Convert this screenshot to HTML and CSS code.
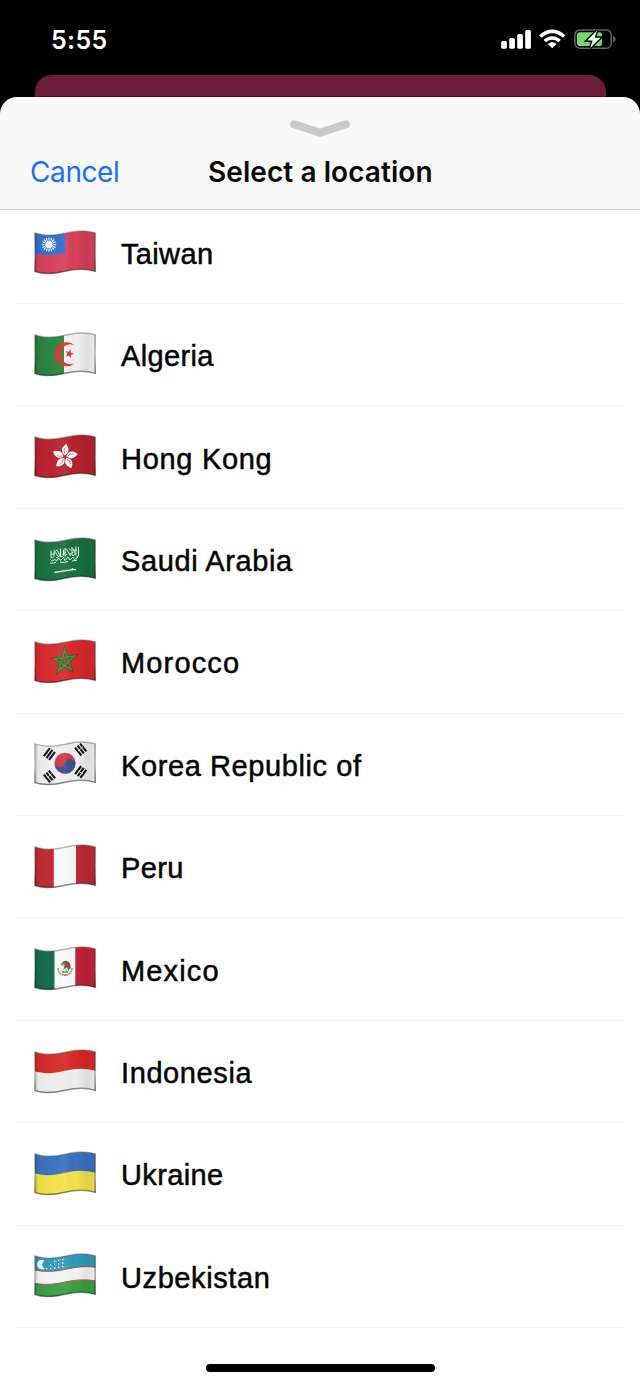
FILE: index.html
```html
<!DOCTYPE html>
<html lang="en">
<head>
<meta charset="utf-8">
<title>Select a location</title>
<link rel="stylesheet" href="styles.css">
</head>
<body>
<svg class="defs" width="0" height="0" aria-hidden="true">
  <defs>
    <path id="outline" d="M.9 2.9C10 6 20 5.8 31 3.3C42 .5 51-.1 61.3 2.9V41.3C51 38.2 42 38.7 31 41.2C20 43.8 10 44.5 .9 41.6Z"/>
    <clipPath id="wave"><use href="#outline"/></clipPath>
    <linearGradient id="fold">
      <stop offset="0" stop-color="#000" stop-opacity=".2"/>
      <stop offset=".06" stop-color="#000" stop-opacity=".03"/>
      <stop offset=".28" stop-color="#fff" stop-opacity=".02"/>
      <stop offset=".5" stop-color="#fff" stop-opacity=".07"/>
      <stop offset=".68" stop-color="#000" stop-opacity="0"/>
      <stop offset=".86" stop-color="#000" stop-opacity=".08"/>
      <stop offset=".97" stop-color="#000" stop-opacity=".04"/>
      <stop offset="1" stop-color="#000" stop-opacity=".25"/>
    </linearGradient>
    <linearGradient id="rim" x2="0" y2="1">
      <stop offset="0" stop-color="#666" stop-opacity=".5"/>
      <stop offset=".5" stop-color="#222" stop-opacity=".2"/>
      <stop offset="1" stop-color="#000" stop-opacity=".5"/>
    </linearGradient>
    <g id="shade"><use href="#outline" fill="url(#fold)"/><use href="#outline" fill="none" stroke="url(#rim)" stroke-width="1.4"/></g>
    <path id="star" d="M0-10L2.25-3.09H9.51L3.63 1.18L5.88 8.09L0 3.82L-5.88 8.09L-3.63 1.18L-9.51-3.09H-2.25Z"/>
    <path id="petal" d="M-.6-1.5C-5-4.5-5.2-9.5-.3-13C1-11 4.4-7 1.6-3.5Z"/>
    <g id="bars" stroke="#111" stroke-width="2.1"><path d="M-5-3.2H5M-5 0H5M-5 3.2H5"/></g>
  </defs>
</svg>
<div class="phone">
  <header class="status">
    <time class="clock">5:55</time>
    <svg class="indicators" width="116" height="24" viewBox="0 0 116 24">
      <g fill="#fff">
        <rect x="1.2" y="14" width="5.7" height="7.7" rx="1.5"/>
        <rect x="9.2" y="11" width="5.7" height="10.7" rx="1.5"/>
        <rect x="17.2" y="7" width="5.7" height="14.7" rx="1.5"/>
        <rect x="25.2" y="3" width="5.7" height="18.7" rx="1.5"/>
        <path d="M39.2 8.2C46.5.7 58 .7 65.3 8.2L62.8 10.7C56.8 4.7 47.7 4.7 41.7 10.7Z"/>
        <path d="M43.6 12.7C48.5 8 56 8 60.9 12.7L58.4 15.2C54.8 11.9 49.7 11.9 46.1 15.2Z"/>
        <path d="M47.9 16.9C50.4 14.6 54.1 14.6 56.6 16.9L52.25 21.3Z"/>
      </g>
      <rect x="74.9" y="3" width="36.4" height="18.2" rx="5" fill="none" stroke="#666" stroke-width="1.5"/>
      <path d="M113.2 9.2C116.4 10.2 116.4 14.4 113.2 15.4Z" fill="#666"/>
      <rect x="77" y="5.2" width="25" height="13.8" rx="2.8" fill="#71d971"/>
      <path d="M97 3.5L87 13.5H92.6L90.2 21L100.6 10.7H94.7Z" fill="#fff" stroke="#000" stroke-width="2.8" paint-order="stroke"/>
    </svg>
  </header>
  <div class="backdrop"></div>
  <main class="sheet">
    <div class="sheet-head">
      <svg class="grabber" width="62" height="20" viewBox="0 0 62 20"><path d="M5 5.3L31 13.8L57 5.3" fill="none" stroke="#c8c7ce" stroke-width="8" stroke-linecap="round" stroke-linejoin="round"/></svg>
      <div class="titlebar"><span class="cancel">Cancel</span><h1 class="title">Select a location</h1></div>
    </div>
    <ul class="list">
      <li class="row"><svg class="flag" viewBox="0 0 62 46"><g clip-path="url(#wave)"><path fill="#d6415a" d="M0 0h62v46H0z"/><path fill="#2e6fd0" d="M0 0h31v22.8C20 25 10 26 0 23z"/><path d="M15 7.4v14.4M7.8 14.6h14.4M9.9 9.5L20.1 19.7M9.9 19.7L20.1 9.5M12.2 8L17.8 21.2M17.8 8L12.2 21.2M8.4 11.8L21.6 17.4M8.4 17.4L21.6 11.8" stroke="#fff" stroke-width="1.1"/><circle cx="15" cy="14.6" r="4.2" fill="#fff" stroke="#2e6fd0" stroke-width=".7"/></g><use href="#shade"/></svg><span class="name">Taiwan</span></li>
      <li class="row"><svg class="flag" viewBox="0 0 62 46"><g clip-path="url(#wave)"><path fill="#f1f1f2" d="M0 0h62v46H0z"/><path fill="#26843f" d="M0 0h30v46H0z"/><path fill="#e52b25" d="M40.7 13.3A12 12 0 1 0 40.7 31.3A10 10 0 1 1 40.7 13.3Z"/><use href="#star" fill="#e52b25" transform="translate(35.3 21.8) rotate(16) scale(.48)"/></g><use href="#shade"/></svg><span class="name">Algeria</span></li>
      <li class="row wide"><svg class="flag" viewBox="0 0 62 46"><g clip-path="url(#wave)"><path fill="#b7222d" d="M0 0h62v46H0z"/><g transform="translate(31 22.8)" fill="#fff"><use href="#petal" transform="rotate(8)"/><use href="#petal" transform="rotate(80)"/><use href="#petal" transform="rotate(152)"/><use href="#petal" transform="rotate(224)"/><use href="#petal" transform="rotate(296)"/><path d="M0-3Q-2-6 0-9M3-1Q5-4 8.5-2.8M2 2.5Q5.5 3.5 5.3 7.3M-2 2.5Q-1.5 6-5.3 7.3M-3-1Q-6 1-8.5-2.8" fill="none" stroke="#c92631" stroke-width=".7"/></g></g><use href="#shade"/></svg><span class="name">Hong Kong</span></li>
      <li class="row mid"><svg class="flag" viewBox="0 0 62 46"><g clip-path="url(#wave)"><path fill="#18703f" d="M0 0h62v46H0z"/><g fill="none" stroke="#e4f3e9" stroke-width="1"><path d="M17 13.5v7q2 1 3-1v-5M20 12.5l4 7M22.5 20.5q3 .5 3-3l-2-4M26.5 11.5v8q2 1 3-1v-6M31 11v8.5M32.5 12l4 7M35 11.5l2 2M38 10v8.5q2 1 3-2l-2-5M42 9.5v9M44.5 10v8q-.3 2-2 2"/><path d="M16.5 22.5q2.5 3 4-.5l2 2 2-3 2 2.5 3-3 1.5 3 3-3.5 2 3 3-3 1.5 2.5q3-1 4-4M17 17q3 1 4-1M24 16l2 2M28.5 17.5l3-2M35 17q3 .5 4-2M16 26q4 .5 6-.7M26 25.2q5 .8 8-.8M38 24l5-.8M22 14l1.5-1.5M33 17l-2 2M40 13.5l3-1"/></g><path d="M20.6 35.4L39 32.6M37.8 31.4q2.5 2 4 .9" stroke="#fff" stroke-width="1.2" fill="none"/></g><use href="#shade"/></svg><span class="name">Saudi Arabia</span></li>
      <li class="row widest"><svg class="flag" viewBox="0 0 62 46"><g clip-path="url(#wave)"><path fill="#d8282c" d="M0 0h62v46H0z"/><path d="M30.5 11L37.2 30.5L20.2 20L40.5 17L24.5 32Z" fill="none" stroke="#4c3327" stroke-width="2.8"/><path d="M30.5 11L37.2 30.5L20.2 20L40.5 17L24.5 32Z" fill="none" stroke="#2c9835" stroke-width="1.8"/></g><use href="#shade"/></svg><span class="name">Morocco</span></li>
      <li class="row mid"><svg class="flag" viewBox="0 0 62 46"><g clip-path="url(#wave)"><path fill="#eeeeef" d="M0 0h62v46H0z"/><g transform="translate(31 22.2)"><circle r="10.5" fill="#cf3744"/><path fill="#33508f" d="M-10.5 1A5.8 5.8 0 0 0 0 0A5.8 5.8 0 0 1 10.5-1A10.5 10.5 0 0 1-10.5 1Z"/></g><use href="#bars" transform="translate(15.5 13) rotate(-54)"/><use href="#bars" transform="translate(46.7 8.5) rotate(51)"/><use href="#bars" transform="translate(15.5 35.5) rotate(51)"/><use href="#bars" transform="translate(46.7 31) rotate(-54)"/><path d="M44 9.8l5-4M13 36.5l5-4M44 30l5 3" stroke="#eee" stroke-width=".8"/></g><use href="#shade"/></svg><span class="name">Korea Republic of</span></li>
      <li class="row"><svg class="flag" viewBox="0 0 62 46"><g clip-path="url(#wave)"><path fill="#fafafa" d="M0 0h62v46H0z"/><path fill="#bf2933" d="M0 0h19.5v46H0zM42 0h20v46H42z"/><path d="M19 0v46M42.5 0v46" stroke="#d51929"/></g><use href="#shade"/></svg><span class="name">Peru</span></li>
      <li class="row widest"><svg class="flag" viewBox="0 0 62 46"><g clip-path="url(#wave)"><path fill="#fafafa" d="M0 0h62v46H0z"/><path fill="#176b4c" d="M0 0h20.5v46H0z"/><path fill="#c22239" d="M41.3 0H62v46H41.3z"/><path d="M24 22q.5 7 7 7t7-7" fill="none" stroke="#8b9b70" stroke-width="1.6" stroke-dasharray="2 .5"/><path d="M27.2 18.5q1-4 5.2-3.8 4.3 1.2 4.3 7l-2.3 2.8-1.4-3.2-3.6 2 1.2-3.7z" fill="#765039"/><path d="M26.5 18l3.4-.3-2.4 2.4M31 22.5l2 3" stroke="#b4975d" stroke-width="1.2" fill="none"/><path d="M26.3 24q4.7 2.4 9.2-.1l-2 3h-5z" fill="#4fa8b5"/><path d="M29.5 29h3.3" stroke="#b84938" stroke-width="1.2"/></g><use href="#shade"/></svg><span class="name">Mexico</span></li>
      <li class="row mid"><svg class="flag" viewBox="0 0 62 46"><g clip-path="url(#wave)"><path fill="#eeeeef" d="M0 0h62v46H0z"/><path fill="#d52a26" d="M0 0h62v22C51 18.7 42 19.2 31 21.7C20 24.5 10 25.3 0 22.1z"/></g><use href="#shade"/></svg><span class="name">Indonesia</span></li>
      <li class="row"><svg class="flag" viewBox="0 0 62 46"><g clip-path="url(#wave)"><path fill="#f2e149" d="M0 0h62v46H0z"/><path fill="#3b70bf" d="M0 0h62v22C51 18.7 42 19.2 31 21.7C20 24.5 10 25.3 0 22.1z"/></g><use href="#shade"/></svg><span class="name">Ukraine</span></li>
      <li class="row mid"><svg class="flag" viewBox="0 0 62 46"><g clip-path="url(#wave)"><path fill="#36a143" d="M0 0h62v46H0z"/><path fill="#f4f3f5" stroke="#c54458" stroke-width="1" d="M-2 16.4C10 19.3 20 18.7 31 16.4C42 14 52 12.5 64 14.7V28.3C52 26 42 26.7 31 29C20 31.6 10 32.3-2 30z"/><path fill="#2d9cb8" d="M0 0h62v13.9C52 12 42 13.3 31 15.7C20 18 10 18.6 0 16.4z"/><path fill="#fff" d="M10.5 7.3A4.9 4.9 0 1 0 10.5 15.8A5.2 5.2 0 0 1 10.5 7.3Z"/><path d="M20 8.2h1.3M24 7.3h1.3M28 6.6h1.3M16 12h1.3M20 11.5h1.3M24 10.8h1.3M28 10h1.3M12 15.6h1.3M16 15.5h1.3M20 15h1.3M24 14.3h1.3M28 13.5h1.3" stroke="#fff" stroke-width="1.3"/></g><use href="#shade"/></svg><span class="name">Uzbekistan</span></li>
    </ul>
  </main>
  <div class="home"></div>
</div>
</body>
</html>
```
FILE: styles.css
```css
* { box-sizing: border-box; }
body { margin: 0; background: #000; }
.defs { position: absolute; }
.phone { width: 640px; height: 1386px; display: flex; flex-direction: column; background: #000; overflow: hidden; position: relative; }
.status { height: 75px; flex: none; display: flex; justify-content: space-between; align-items: flex-start; padding: 27px 24px 0 51px; color: #fff; }
.clock { font: 600 25px/26px Inter, sans-serif; letter-spacing: .4px; }
.indicators { display: block; }
.backdrop { flex: none; height: 22px; margin: 0 34.5px; background: #6b1d3a; border-radius: 17px 17px 0 0; border-bottom: 1px solid #560914; }
.sheet { flex: 1; background: linear-gradient(#000 30px, #fff 30px); display: flex; flex-direction: column; }
.sheet-head { height: 113px; flex: none; background: #f9f9f9; border-radius: 17px 17px 0 0; border-bottom: 1px solid #d3d3d4; padding-top: 22px; display: flex; flex-direction: column; align-items: center; }
.grabber { display: block; flex: none; }
.titlebar { width: 100%; display: grid; grid-template-columns: 178px 1fr; padding: 16px 0 0 30px; line-height: 34px; }
.cancel { font-family: Inter, sans-serif; font-size: 28px; color: #176fff; letter-spacing: -.4px; }
.title { margin: 0; font-family: Inter, sans-serif; font-size: 28px; font-weight: 600; letter-spacing: .07px; color: #0a0a0a; }
.list { list-style: none; margin: 0; padding: 0 16px; }
.row { height: 102.42px; display: flex; align-items: center; padding-left: 18px; border-bottom: 1px solid #f5f5f5; }
.row:first-child { height: 94px; padding-bottom: 8px; }
.flag { width: 62px; height: 46px; margin-right: 25px; flex: none; }
.name { font-family: "Liberation Sans", Arial, sans-serif; font-size: 29px; line-height: 34px; letter-spacing: .35px; padding-top: 3px; color: #050505; -webkit-text-stroke: .5px #050505; }
.mid .name { letter-spacing: .6px; }
.wide .name { letter-spacing: .7px; }
.widest .name { letter-spacing: 1.15px; }
.home { position: absolute; left: 206px; top: 1364px; width: 229px; height: 8px; border-radius: 4px; background: #000; }
```
